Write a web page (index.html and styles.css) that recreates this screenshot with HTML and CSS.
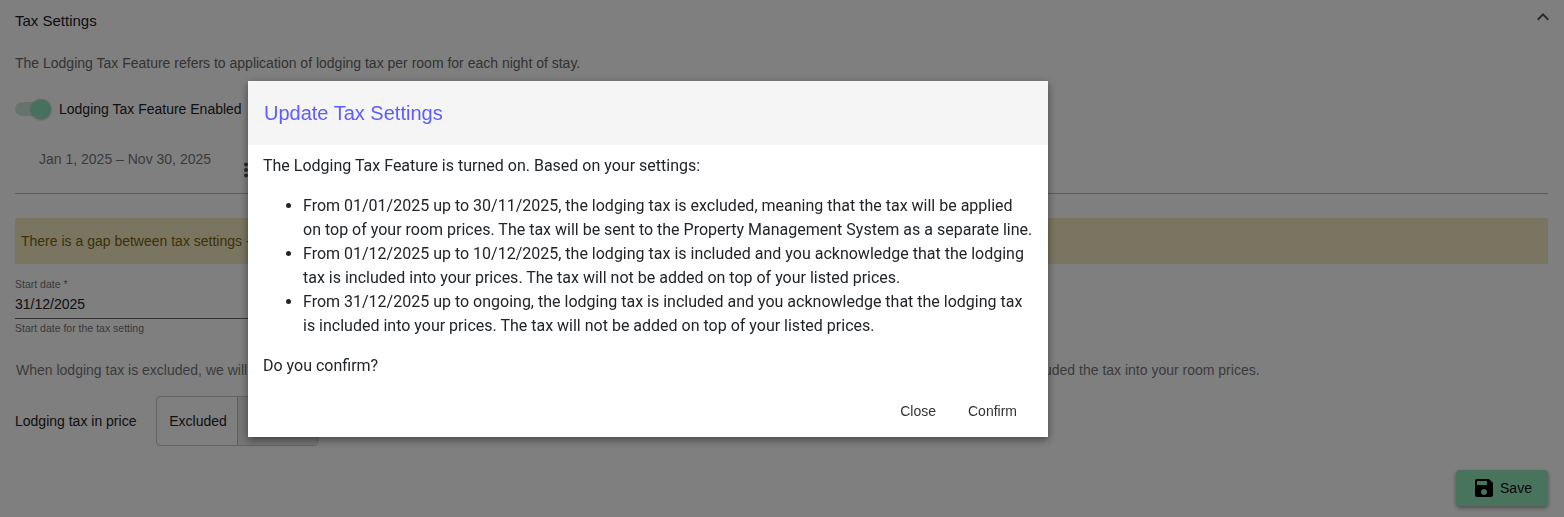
FILE: index.html
```html
<!DOCTYPE html>
<html lang="en">
<head>
<meta charset="utf-8">
<title>Tax Settings</title>
<link rel="stylesheet" href="styles.css">
</head>
<body>
<main class="page">
  <header class="section-head">
    <h2 class="section-title">Tax Settings</h2>
    <svg class="chevron" viewBox="0 0 24 24" width="24" height="24"><path d="M12 8l-6 6 1.41 1.41L12 10.83l4.59 4.58L18 14z"/></svg>
  </header>
  <p class="intro">The Lodging Tax Feature refers to application of lodging tax per room for each night of stay.</p>
  <div class="switch-row">
    <span class="switch"><span class="switch-track"></span><span class="switch-thumb"></span></span>
    <span class="switch-label">Lodging Tax Feature Enabled</span>
  </div>
  <div class="tabs">
    <span class="tab-label">Jan 1, 2025 – Nov 30, 2025</span>
    <svg class="kebab" viewBox="0 0 6 16" width="6" height="16"><circle cx="3" cy="2.5" r="2"/><circle cx="3" cy="8" r="2"/><circle cx="3" cy="13.5" r="2"/></svg>
  </div>
  <div class="alert">There is a gap between tax settings - please review the dates of your settings.</div>
  <div class="field">
    <label class="field-label">Start date *</label>
    <div class="field-value">31/12/2025</div>
    <div class="field-help">Start date for the tax setting</div>
  </div>
  <p class="explain">When lodging tax is excluded, we will add the tax on top of your room prices at checkout. When lodging tax is included, we assume that you have already properly included the tax into your room prices.</p>
  <div class="price-row">
    <span class="price-label">Lodging tax in price</span>
    <div class="toggle-group">
      <span class="toggle">Excluded</span>
      <span class="toggle toggle-on">Included</span>
    </div>
  </div>
  <div class="actions">
    <button class="save" type="button">
      <svg viewBox="0 0 24 24" width="24" height="24"><path d="M17 3H5c-1.11 0-2 .9-2 2v14c0 1.100.89 2 2 2h14c1.100 0 2-.9 2-2V7l-4-4zm-5 16c-1.660 0-3-1.340-3-3s1.340-3 3-3 3 1.340 3 3-1.340 3-3 3zm3-10H5V5h10v4z"/></svg>
      <span>Save</span>
    </button>
  </div>
</main>
<div class="backdrop"></div>
<section class="dialog">
  <h3 class="dialog-title">Update Tax Settings</h3>
  <div class="dialog-body">
    <p>The Lodging Tax Feature is turned on. Based on your settings:</p>
    <ul>
      <li>From 01/01/2025 up to 30/11/2025, the lodging tax is excluded, meaning that the tax will be applied on top of your room prices. The tax will be sent to the Property Management System as a separate line.</li>
      <li>From 01/12/2025 up to 10/12/2025, the lodging tax is included and you acknowledge that the lodging tax is included into your prices. The tax will not be added on top of your listed prices.</li>
      <li>From 31/12/2025 up to ongoing, the lodging tax is included and you acknowledge that the lodging tax is included into your prices. The tax will not be added on top of your listed prices.</li>
    </ul>
    <p>Do you confirm?</p>
  </div>
  <div class="dialog-actions">
    <button class="text-btn" type="button">Close</button>
    <button class="text-btn" type="button">Confirm</button>
  </div>
</section>
</body>
</html>
```
FILE: styles.css
```css
* { box-sizing: border-box; }
html, body { margin: 0; height: 100%; overflow: hidden; }
body { background: #fff; font-family: "Liberation Sans", Arial, sans-serif; color: #212121; }

.page { display: flex; flex-direction: column; height: 517px; padding: 0 16px 0 15px; font-size: 14px; }

.section-head { display: flex; justify-content: space-between; align-items: center; height: 40px; }
.section-title { margin: 0; font-size: 15px; font-weight: 400; color: #1a1a1a; }
.chevron { fill: #555; margin: -6px -7px 0 0; }

.intro { margin: 13px 0 0; line-height: 20px; color: #666; }

.switch-row { display: flex; align-items: center; gap: 8px; margin-top: 24px; height: 24px; }
.switch { position: relative; display: block; width: 36px; height: 20px; }
.switch-track { position: absolute; left: 0; top: 3px; width: 34px; height: 14px; border-radius: 7px; background: #cfe8dc; }
.switch-thumb { position: absolute; left: 16px; top: 0; width: 20px; height: 20px; border-radius: 50%; background: #8fe0bd; box-shadow: 0 1px 3px rgba(0,0,0,.3); }
.switch-label { color: #222; }

.tabs { display: flex; align-items: flex-start; height: 64px; padding: 19px 0 0 24px; border-bottom: 1px solid #bdbdbd; margin-top: 9px; }
.tab-label { width: 204px; line-height: 20px; font-size: 14px; color: #777; }
.kebab { fill: #555; margin-top: 13px; }

.alert { margin: 24px 0 0 0; height: 46px; padding: 0 6px; line-height: 46px; background: #f5ebc0; color: #7a620f; white-space: nowrap; }

.field { width: 500px; margin-top: 14px; }
.field-label { display: block; font-size: 10.5px; line-height: 13px; color: #757575; }
.field-value { height: 26px; line-height: 22px; font-size: 14px; color: #212121; border-bottom: 1px solid #666; margin-top: 2px; }
.field-help { font-size: 10.5px; line-height: 13px; margin-top: 3px; color: #757575; }

.explain { margin: 25px 0 0 1px; line-height: 20px; color: #777; white-space: nowrap; }

.price-row { display: flex; align-items: center; margin-top: 16px; }
.price-label { width: 141px; color: #222; }
.toggle-group { display: flex; width: 162px; height: 50px; border: 1px solid #c8c8c8; border-radius: 4px; overflow: hidden; }
.toggle { display: flex; align-items: center; justify-content: center; width: 81px; padding-left: 2px; color: #222; }
.toggle-on { width: 81px; border-left: 1px solid #c0c0c0; background: #ebebeb; }

.actions { display: flex; justify-content: flex-end; margin-top: 24px; }
.save { display: flex; align-items: center; justify-content: center; gap: 4px; width: 92px; height: 36px; padding: 0; border: 0; border-radius: 4px; background: #90e6bb; color: #111; font: 14px "Liberation Sans", Arial, sans-serif; box-shadow: 0 2px 4px rgba(0,0,0,.4); }
.save svg { fill: #000; }

.backdrop { position: fixed; inset: 0; background: rgba(0,0,0,.5); }

.dialog { position: fixed; left: 248px; top: 81px; width: 800px; height: 356px; background: #fff; box-shadow: 0 3px 8px rgba(0,0,0,.45); display: flex; flex-direction: column; }
.dialog-title { margin: 0; height: 64px; padding: 0 16px; background: #f5f5f5; color: #5c5cff; font-size: 20px; font-weight: 400; line-height: 64px; }
.dialog-body { padding: 9px 15px 0; font: 16px/24px Roboto, "Open Sans", sans-serif; color: #212529; flex: 1; }
.dialog-body p { margin: 0; }
.dialog-body ul { margin: 16px 0; padding-left: 40px; }
.dialog-actions { display: flex; justify-content: flex-end; padding: 0 15px 8px 0; }
.text-btn { height: 36px; padding: 0 16px; background: none; border: 0; font: 14px "Liberation Sans", Arial, sans-serif; color: #333; }
```
